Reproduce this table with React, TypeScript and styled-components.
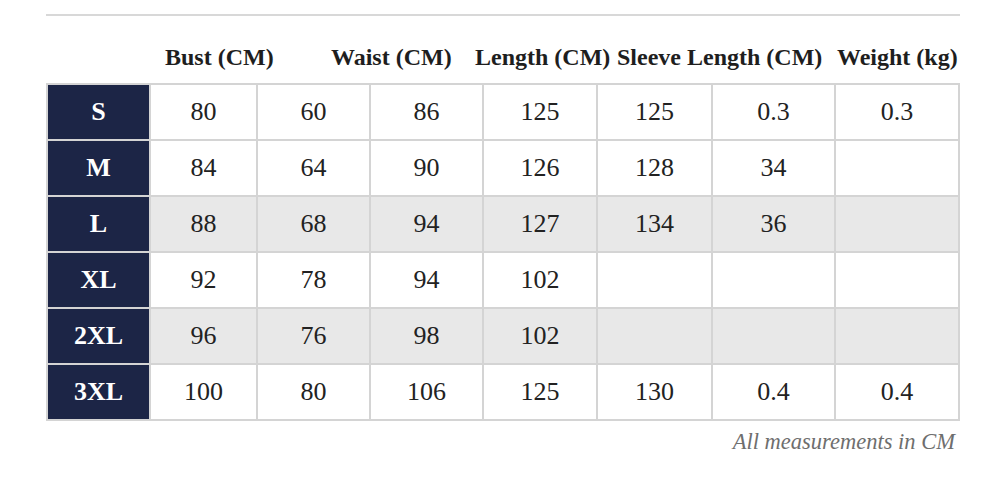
import styled, { createGlobalStyle } from "styled-components";

const GlobalStyle = createGlobalStyle`
  html, body {
    margin: 0;
    padding: 0;
    background: #ffffff;
  }
  body {
    font-family: "Liberation Serif", "Times New Roman", serif;
    color: #222222;
  }
`;

const Page = styled.div`
  width: 1008px;
  height: 482px;
  box-sizing: border-box;
  padding: 14px 48px 0 46px;
  display: flex;
  flex-direction: column;
`;

const Rule = styled.div`
  height: 2px;
  background-color: #d8d8d8;
`;

const HeaderRow = styled.div`
  display: grid;
  grid-template-columns: 119px 166px 144px 142px 220px 1fr;
  margin-top: 28px;
  margin-bottom: 12px;
  & span {
    font-size: 24px;
    line-height: 27px;
    font-weight: 700;
    color: #1e1e1e;
    white-space: nowrap;
  }
`;

const Table = styled.div`
  display: grid;
  grid-template-columns: 101px 105px 111px 111px 112px 113px 121px 1fr;
  grid-auto-rows: 54px;
  gap: 2px;
  padding: 2px;
  background-color: #d4d4d4;
`;

const SizeCell = styled.div`
  display: flex;
  align-items: center;
  justify-content: center;
  background-color: #1c2546;
  color: #ffffff;
  font-size: 26px;
  font-weight: 700;
`;

const Cell = styled.div<{ $shade: boolean }>`
  display: flex;
  align-items: center;
  justify-content: center;
  background-color: ${(props) => (props.$shade ? "#e8e8e8" : "#ffffff")};
  font-size: 26px;
  color: #222222;
`;

const Note = styled.div`
  align-self: flex-end;
  margin-top: 7px;
  padding-right: 5px;
  font-size: 22.5px;
  line-height: 27px;
  font-style: italic;
  color: #6e6e6e;
`;

const headers = [
  "Bust (CM)",
  "Waist (CM)",
  "Length (CM)",
  "Sleeve Length (CM)",
  "Weight (kg)",
];

const rows = [
  { size: "S", values: ["80", "60", "86", "125", "125", "0.3", "0.3"], shade: false },
  { size: "M", values: ["84", "64", "90", "126", "128", "34", ""], shade: false },
  { size: "L", values: ["88", "68", "94", "127", "134", "36", ""], shade: true },
  { size: "XL", values: ["92", "78", "94", "102", "", "", ""], shade: false },
  { size: "2XL", values: ["96", "76", "98", "102", "", "", ""], shade: true },
  { size: "3XL", values: ["100", "80", "106", "125", "130", "0.4", "0.4"], shade: false },
];

export default function App() {
  return (
    <>
      <GlobalStyle />
      <Page>
        <Rule />
        <HeaderRow>
          <span />
          {headers.map((h) => (
            <span key={h}>{h}</span>
          ))}
        </HeaderRow>
        <Table>
          {rows.map((row) => [
            <SizeCell key={row.size}>{row.size}</SizeCell>,
            ...row.values.map((v, i) => (
              <Cell key={row.size + i} $shade={row.shade}>
                {v}
              </Cell>
            )),
          ])}
        </Table>
        <Note>All measurements in CM</Note>
      </Page>
    </>
  );
}
